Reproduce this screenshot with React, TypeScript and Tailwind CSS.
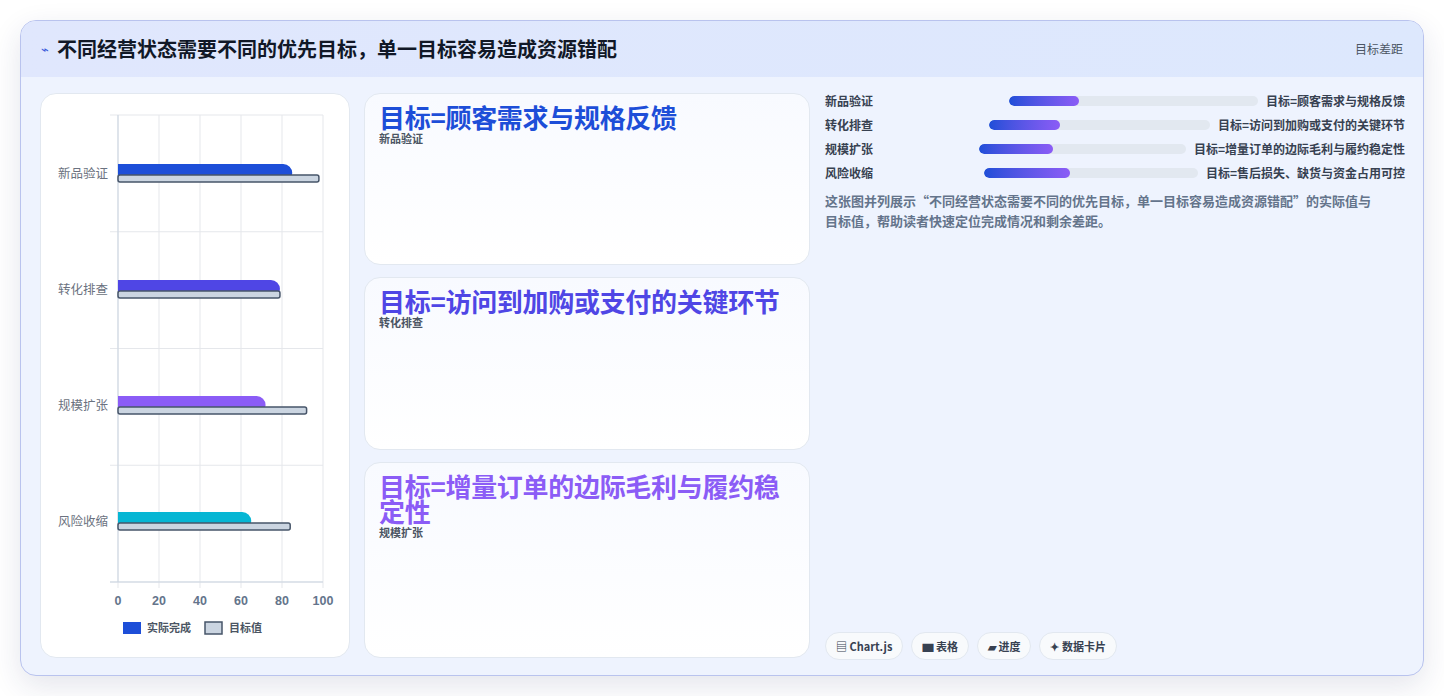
import React from "react";

const font = { fontFamily: '"Noto Sans CJK SC", "Noto Sans", sans-serif' };
const cats = [
  { n: "新品验证", a: 85, t: 98, c: "#1d4ed8" },
  { n: "转化排查", a: 79, t: 79, c: "#4f46e5" },
  { n: "规模扩张", a: 72, t: 92, c: "#8b5cf6" },
  { n: "风险收缩", a: 65, t: 84, c: "#06b6d4" },
];
const prog = [
  { n: "新品验证", w: 249, f: 28, t: "目标=顾客需求与规格反馈" },
  { n: "转化排查", w: 221, f: 32, t: "目标=访问到加购或支付的关键环节" },
  { n: "规模扩张", w: 207, f: 36, t: "目标=增量订单的边际毛利与履约稳定性" },
  { n: "风险收缩", w: 214, f: 40, t: "目标=售后损失、缺货与资金占用可控" },
];

function Chart() {
  const x0 = 118, x1 = 323, y0 = 115, y1 = 582;
  const sx = (v: number) => x0 + ((x1 - x0) * v) / 100;
  return (
    <svg width="309" height="563" viewBox="41 94 309 563" className="block">
      {[0, 20, 40, 60, 80, 100].map((v) => (
        <line key={v} x1={sx(v)} x2={sx(v)} y1={y0} y2={y1 + 6} stroke="#e5e7eb" />
      ))}
      {[0, 1, 2, 3, 4].map((i) => (
        <line key={i} x1={x0 - 8} x2={x1} y1={y0 + i * 116.75} y2={y0 + i * 116.75} stroke="#e5e7eb" />
      ))}
      <line x1={x0} x2={x0} y1={y0} y2={y1} stroke="#cbd5e1" />
      <line x1={x0 - 8} x2={x1} y1={y1} y2={y1} stroke="#cbd5e1" />
      {cats.map((c, i) => {
        const cy = 173 + i * 116;
        return (
          <g key={c.n}>
            <text x={x0 - 10} y={cy + 5} textAnchor="end" fontSize="12.5" fill="#6b7280" style={font}>{c.n}</text>
            <path d={`M${x0} ${cy - 9} H${sx(c.a) - 9} a9 9 0 0 1 0 18 H${x0} Z`} fill={c.c} />
            <rect x={x0} y={cy + 2} width={sx(c.t) - x0} height={7} rx={2} fill="#cbd5e1" stroke="#475569" strokeWidth="1.5" />
          </g>
        );
      })}
      {[0, 20, 40, 60, 80, 100].map((v) => (
        <text key={v} x={sx(v)} y={605} textAnchor="middle" fontSize="12.5" fontWeight="700" fill="#64748b" style={{ fontFamily: '"Liberation Sans", sans-serif' }}>{v}</text>
      ))}
      <rect x={123} y={622} width={18} height={12} fill="#1d4ed8" />
      <text x={147} y={632} fontSize="11" fontWeight="700" fill="#4b5563" style={font}>实际完成</text>
      <rect x={205} y={622} width={17} height={12} fill="#cbd5e1" stroke="#475569" strokeWidth="1.5" />
      <text x={229} y={632} fontSize="11" fontWeight="700" fill="#4b5563" style={font}>目标值</text>
    </svg>
  );
}

function Card({ title, sub, color, grow }: { title: string; sub: string; color: string; grow: string }) {
  return (
    <div className={`${grow} rounded-2xl border border-[#e2e8f0] bg-gradient-to-b from-[#f8faff] to-white px-[14px] pt-[10px]`}>
      <div className={`text-[26px] font-bold leading-[25px] tracking-[-0.3px] ${color}`}>{title}</div>
      <div className="text-[11px] font-bold text-[#4b5563] mt-[1px]">{sub}</div>
    </div>
  );
}

export default function App() {
  return (
    <div className="w-[1444px] h-[696px] bg-white pt-5 pl-5" style={font}>
      <div className="w-[1404px] h-[656px] rounded-2xl border border-[#b9c3ee] bg-[#eef3fe] shadow-[0_10px_30px_rgba(30,41,99,0.12)] overflow-hidden flex flex-col">
        <div className="h-[56px] shrink-0 bg-gradient-to-r from-[#e0e7fd] to-[#dde8fd] flex items-center px-5">
          <span className="text-[#3b5bdb] text-[13px] mr-2">⌁</span>
          <span className="text-[20px] font-bold text-[#111827]">不同经营状态需要不同的优先目标，单一目标容易造成资源错配</span>
          <span className="ml-auto text-[12px] text-[#4b5563]">目标差距</span>
        </div>
        <div className="flex-1 flex gap-[14px] pl-[19px] pr-[18px] pt-[16px] pb-[18px]">
          <div className="w-[310px] shrink-0 rounded-2xl border border-[#e2e8f0] bg-white overflow-hidden">
            <Chart />
          </div>
          <div className="w-[446px] shrink-0 flex flex-col gap-3">
            <Card title="目标=顾客需求与规格反馈" sub="新品验证" color="text-[#1d4ed8]" grow="flex-1" />
            <Card title="目标=访问到加购或支付的关键环节" sub="转化排查" color="text-[#4f46e5]" grow="flex-1" />
            <Card title="目标=增量订单的边际毛利与履约稳定性" sub="规模扩张" color="text-[#8b5cf6]" grow="flex-[1.15]" />
          </div>
          <div className="flex-1 flex flex-col pl-[1px]">
            <div className="flex flex-col gap-[8px]">
              {prog.map((p) => (
                <div key={p.n} className="flex items-center h-[16px]">
                  <span className="text-[12px] font-bold text-[#374151]">{p.n}</span>
                  <div className="ml-auto h-[10px] rounded-full bg-[#e2e8f0] overflow-hidden" style={{ width: p.w }}>
                    <div className="h-full rounded-full bg-gradient-to-r from-[#1d4ed8] to-[#8b5cf6]" style={{ width: `${p.f}%` }} />
                  </div>
                  <span className="ml-2 text-[12px] font-bold text-[#374151]">{p.t}</span>
                </div>
              ))}
            </div>
            <p className="mt-[10px] text-[13px] leading-[20px] text-[#64748b] font-semibold pr-6">
              这张图并列展示“不同经营状态需要不同的优先目标，单一目标容易造成资源错配”的实际值与目标值，帮助读者快速定位完成情况和剩余差距。
            </p>
            <div className="mt-auto flex gap-2 mb-[-2px]">
              {["▤ Chart.js", "▆ 表格", "▰ 进度", "✦ 数据卡片"].map((t) => (
                <span key={t} className="h-[28px] px-[10px] flex items-center rounded-full bg-[#f8fafc] border border-[#e2e8f0] text-[11px] font-bold text-[#374151]">{t}</span>
              ))}
            </div>
          </div>
        </div>
      </div>
    </div>
  );
}
